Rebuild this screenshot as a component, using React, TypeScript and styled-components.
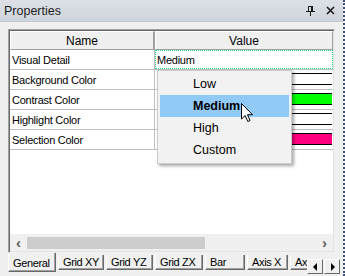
import styled, {createGlobalStyle} from "styled-components";

const GlobalStyle = createGlobalStyle`
    html, body {
        margin: 0;
        padding: 0;
        background: #f0f0f0;
    }
    * {
        box-sizing: border-box;
    }
`;

interface PropRow {
    name: string;
    color?: string;
    text?: string;
}

const rows: PropRow[] = [
    {name: "Visual Detail", text: "Medium"},
    {name: "Background Color", color: "#ffffff"},
    {name: "Contrast Color", color: "#00ff00"},
    {name: "Highlight Color", color: "#ffffff"},
    {name: "Selection Color", color: "#ff0080"},
];

const options = ["Low", "Medium", "High", "Custom"];

const tabs = [
    {label: "General", w: 48},
    {label: "Grid XY", w: 46},
    {label: "Grid YZ", w: 47},
    {label: "Grid ZX", w: 48},
    {label: "Bar", w: 40},
    {label: "Axis X", w: 41},
    {label: "Axis Y", w: 41},
];

export default function App() {
    return (
        <Window>
            <GlobalStyle/>
            <TitleBar>
                <Title>Properties</Title>
                <TitleButtons>
                    <svg width="9" height="10" viewBox="0 0 9 10">
                        <path d="M2.5 0.5 H6.5 V5.5 H2.5 Z" fill="none" stroke="#1a1a1a"/>
                        <rect x="5" y="0" width="2" height="6" fill="#1a1a1a"/>
                        <rect x="0" y="5" width="9" height="1" fill="#1a1a1a"/>
                        <rect x="4" y="6" width="1" height="4" fill="#1a1a1a"/>
                    </svg>
                    <svg width="9" height="9" viewBox="0 0 9 9">
                        <path d="M1 1 L8 8 M8 1 L1 8" stroke="#1a1a1a" strokeWidth="1.6"/>
                    </svg>
                </TitleButtons>
            </TitleBar>
            <Body>
                <Grid>
                    <HeaderRow>
                        <HeaderCell>Name</HeaderCell>
                        <HeaderCell $last>Value</HeaderCell>
                    </HeaderRow>
                    {rows.map(row => (
                        <Row key={row.name}>
                            <NameCell>{row.name}</NameCell>
                            <ValueCell $focused={!!row.text}>
                                {row.text ? row.text : <Swatch $color={row.color!}/>}
                            </ValueCell>
                        </Row>
                    ))}
                    <Filler/>
                    <HScroll>
                        <ScrollArrow>&lsaquo;</ScrollArrow>
                        <Track>
                            <Thumb/>
                        </Track>
                        <ScrollArrow>&rsaquo;</ScrollArrow>
                    </HScroll>
                </Grid>
            </Body>
            <TabStrip>
                <TabList>
                    {tabs.map((tab, i) => (
                        <Tab key={tab.label} $active={i === 0} $w={tab.w}>{tab.label}</Tab>
                    ))}
                </TabList>
                <TabArrows>
                    <TabArrow>
                        <svg width="5" height="8" viewBox="0 0 5 8"><path d="M4 0 V8 L0 4 Z" fill="#000"/></svg>
                    </TabArrow>
                    <TabArrow>
                        <svg width="5" height="8" viewBox="0 0 5 8"><path d="M1 0 V8 L5 4 Z" fill="#000"/></svg>
                    </TabArrow>
                </TabArrows>
            </TabStrip>

            <Dropdown>
                {options.map(opt => (
                    <Option key={opt} $selected={opt === "Medium"}>{opt}</Option>
                ))}
                <Cursor width="14" height="20" viewBox="0 0 14 20">
                    <path d="M0.5 0.5 L0.5 16 L4.2 12.5 L6.8 18.5 L9 17.5 L6.5 11.7 L11.5 11.7 Z"
                          fill="#fff" stroke="#000" strokeWidth="1" strokeLinejoin="round"/>
                </Cursor>
            </Dropdown>
        </Window>
    );
}

const Window = styled.div`
    position: relative;
    width: 345px;
    height: 276px;
    background: #f0f0f0;
    border-right: 2px dotted #3d4f74;
    display: flex;
    flex-direction: column;
    overflow: hidden;
    font-family: "Liberation Sans", Arial, sans-serif;
    color: #000;
`;

const TitleBar = styled.div`
    height: 22px;
    flex: none;
    display: flex;
    align-items: center;
    justify-content: space-between;
    padding: 0 8px 0 4px;
    background: linear-gradient(#dde1e7, #ced4db);
    border-bottom: 1px solid #c4c9d0;
`;

const Title = styled.div`
    font-size: 12.5px;
    color: #1e1e1e;
`;

const TitleButtons = styled.div`
    display: flex;
    align-items: center;
    gap: 11px;
`;

const Body = styled.div`
    padding: 7px 8px 0 8px;
    flex: none;
`;

const Grid = styled.div`
    height: 224px;
    border: 1px solid #a0a0a0;
    border-right-color: #f0f0f0;
    border-bottom-color: #f0f0f0;
    box-shadow: inset 1px 1px 0 #696969, inset -1px -1px 0 #e3e3e3;
    padding: 1px;
    background: #fff;
    display: flex;
    flex-direction: column;
    font-size: 11px;
`;

const HeaderRow = styled.div`
    display: grid;
    grid-template-columns: 145px 1fr;
    height: 19px;
    flex: none;
`;

const HeaderCell = styled.div<{ $last?: boolean }>`
    background: #f0f0f0;
    border-top: 1px solid #fff;
    border-left: 1px solid #fff;
    border-bottom: 1px solid #a0a0a0;
    border-right: ${p => p.$last ? "1px solid #a0a0a0" : "2px solid #a0a0a0"};
    display: flex;
    align-items: center;
    justify-content: center;
    font-size: 12px;
`;

const Row = styled.div`
    display: grid;
    grid-template-columns: 145px 1fr;
    height: 20px;
    flex: none;
    border-bottom: 1px solid #c0c0c0;
`;

const NameCell = styled.div`
    border-right: 1px solid #c0c0c0;
    padding-left: 2px;
    display: flex;
    align-items: center;
    white-space: nowrap;
    letter-spacing: -0.25px;
`;

const ValueCell = styled.div<{ $focused: boolean }>`
    display: flex;
    align-items: center;
    padding-left: 1px;
    border: 1px dotted ${p => p.$focused ? "#17d77c" : "transparent"};
    border-bottom-width: ${p => p.$focused ? "1px" : "0"};
    letter-spacing: -0.25px;
`;

const Swatch = styled.div<{ $color: string }>`
    width: 100%;
    height: 12px;
    margin-left: 2px;
    margin-top: -2px;
    background: ${p => p.$color};
    border-top: 1px solid #000;
    border-bottom: 1px solid #000;
`;

const Filler = styled.div`
    flex: 1;
`;

const HScroll = styled.div`
    height: 17px;
    flex: none;
    display: flex;
    align-items: center;
    background: #f0f0f0;
`;

const ScrollArrow = styled.div`
    width: 17px;
    text-align: center;
    font-size: 15px;
    font-weight: bold;
    color: #606060;
    line-height: 17px;
`;

const Track = styled.div`
    flex: 1;
    height: 100%;
    display: flex;
    align-items: center;
`;

const Thumb = styled.div`
    width: 178px;
    height: 12px;
    background: #cdcdcd;
`;

const TabStrip = styled.div`
    flex: 1;
    display: flex;
    padding-left: 8px;
    font-size: 11px;
`;

const TabList = styled.div`
    width: 299px;
    display: flex;
    gap: 2px;
    overflow: hidden;
    align-items: flex-start;
`;

const Tab = styled.div<{ $active: boolean; $w: number }>`
    flex: none;
    width: ${p => p.$w}px;
    height: ${p => p.$active ? 19 : 15}px;
    margin-top: ${p => p.$active ? 0 : 2}px;
    padding: ${p => p.$active ? "4px 0 0 4px" : "1px 0 0 4px"};
    background: #f0f0f0;
    border-left: 1px solid #fff;
    border-right: 1px solid #696969;
    border-bottom: 1px solid #696969;
    box-shadow: inset -1px -1px 0 #a0a0a0;
    white-space: nowrap;
    overflow: hidden;
    letter-spacing: -0.35px;
`;

const TabArrows = styled.div`
    display: flex;
    gap: 1px;
    padding-top: 6px;
`;

const TabArrow = styled.div`
    width: 16px;
    height: 15px;
    background: #f0f0f0;
    border-left: 1px solid #fff;
    border-top: 1px solid #fff;
    border-right: 1px solid #696969;
    border-bottom: 1px solid #696969;
    display: flex;
    align-items: center;
    justify-content: center;
`;

const Dropdown = styled.div`
    position: absolute;
    left: 157px;
    top: 70px;
    width: 135px;
    padding: 2px 1px;
    background: #f2f2f2;
    border: 1px solid #cccccc;
    box-shadow: 2px 2px 3px rgba(0, 0, 0, 0.35);
    font-size: 12.5px;
`;

const Option = styled.div<{ $selected: boolean }>`
    height: 22px;
    margin: 0 1px;
    padding-left: 33px;
    display: flex;
    align-items: center;
    background: ${p => p.$selected ? "#91c9f7" : "transparent"};
    font-weight: ${p => p.$selected ? "bold" : "normal"};
`;

const Cursor = styled.svg`
    position: absolute;
    left: 83px;
    top: 32px;
`;
